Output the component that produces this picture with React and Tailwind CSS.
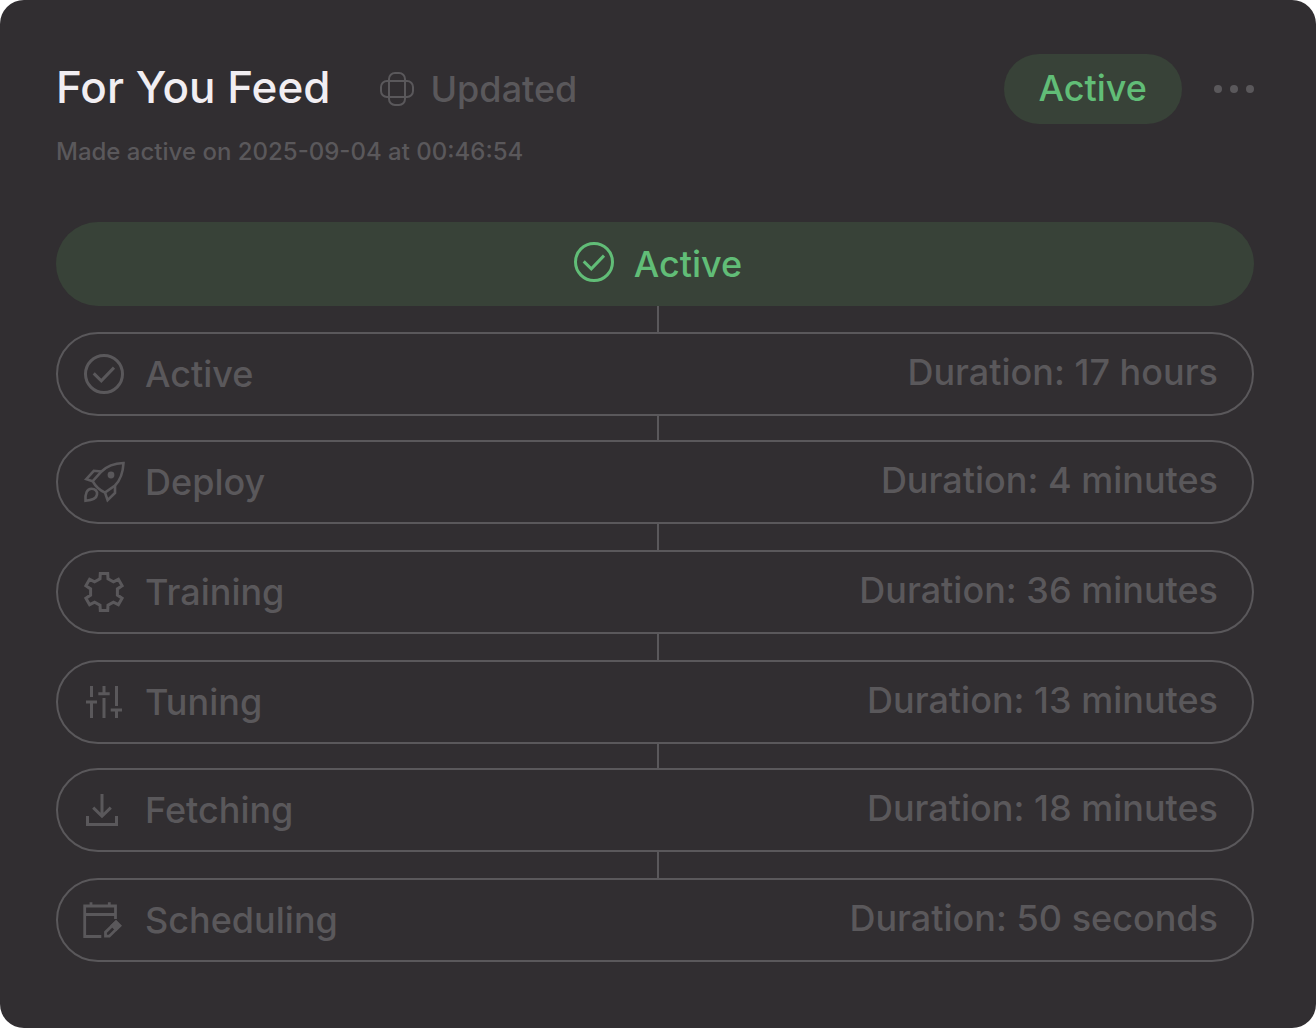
const svgProps = {
  viewBox: '0 0 44 44',
  fill: 'none',
  stroke: 'currentColor',
  strokeWidth: 3,
  className: 'size-11 shrink-0',
  'aria-hidden': true,
};

function CheckIcon() {
  return (
    <svg {...svgProps}>
      <circle cx="22" cy="22" r="18.5" />
      <path d="M11.7 21.4 19.3 28.8 32 15.6" />
    </svg>
  );
}

function RocketIcon() {
  return (
    <svg {...svgProps} strokeWidth={2.6}>
      <path d="M41.5 3C32 3.4 24.5 6.5 19.5 11.5L10.7 21.2C13.5 26.5 17.5 30.3 23 32.6L33 25.5C38 20.5 41 12.5 41.5 3Z" />
      <path d="M19.5 11.5 11.8 10.8 4.3 19.2 10.7 21.2M33 25.5 33 33 25.6 40.2 23 32.6" />
      <path d="M3.5 40.8C3 33.5 5 28.7 9.5 28.7C13 28.7 15.5 31 15 34.5C14.5 38.5 10 40.2 3.5 40.8Z" />
      <circle cx="29" cy="15" r="3.4" fill="currentColor" stroke="none" />
    </svg>
  );
}

function GearIcon() {
  return (
    <svg {...svgProps}>
      <path
        transform="translate(22 22)"
        d="M-3.7-18.4H3.7L4-13.2 9.4-10.1 14.4-12.7 18.1-6.2 13.4-3.1V3.1L18.1 6.2 14.4 12.7 9.4 10.1 4 13.2 3.7 18.4H-3.7L-4 13.2-9.4 10.1-14.4 12.7-18.1 6.2-13.4 3.1V-3.1L-18.1-6.2-14.4-12.7-9.4-10.1-4-13.2Z"
      />
    </svg>
  );
}

function SlidersIcon() {
  return (
    <svg {...svgProps}>
      <path d="M9.5 6V17M4 22H15M9.5 22V38M22 6V13.700M16.300 13.700H27.700M22 18V38M34.500 6V26M28.700 30H40M34.500 30V38" />
    </svg>
  );
}

function DownloadIcon() {
  return (
    <svg {...svgProps}>
      <path d="M20 6V28M11.2 19.600 20 28.200 28.800 19.600M5.500 28V36.500H34.500V28" />
    </svg>
  );
}

function ScheduleIcon() {
  return (
    <svg {...svgProps} strokeWidth={2.8}>
      <path d="M19.3 38.500H2.700V8H33.500V21M2.700 16.500H33.500M9 4.300V8M27.300 4.300V8" />
      <path d="M23.500 38.200V34.200L34 23.900 37.800 27.700 27.300 38.200Z" />
      <path d="M30.200 27.600 34 23.900 37.800 27.700 34 31.500Z" fill="currentColor" />
    </svg>
  );
}

function UpdatedIcon() {
  return (
    <svg viewBox="0 0 34 34" fill="none" stroke="currentColor" strokeWidth="2" className="size-[34px] shrink-0" aria-hidden>
      <rect x="9" y="1" width="16" height="32" rx="6" />
      <rect x="1" y="9" width="32" height="16" rx="6" />
    </svg>
  );
}

const steps = [
  { name: 'Active', duration: '17 hours', Icon: CheckIcon, link: 'h-[26px]' },
  { name: 'Deploy', duration: '4 minutes', Icon: RocketIcon, link: 'h-6' },
  { name: 'Training', duration: '36 minutes', Icon: GearIcon, link: 'h-[26px]' },
  { name: 'Tuning', duration: '13 minutes', Icon: SlidersIcon, link: 'h-[26px]' },
  { name: 'Fetching', duration: '18 minutes', Icon: DownloadIcon, link: 'h-6' },
  { name: 'Scheduling', duration: '50 seconds', Icon: ScheduleIcon, link: 'h-[26px]' },
];

export default function App() {
  return (
    <main className="min-h-screen bg-white font-['Inter',sans-serif] font-medium text-[#5a585b]">
      <section className="min-h-screen rounded-3xl bg-[#312e31] px-14 pt-[54px] pb-[66px]">
        <header>
          <div className="flex items-center">
            <h1 className="pb-1 text-[44px] leading-[66px] font-medium text-[#f1eef2]">For You Feed</h1>
            <div className="ml-[50px] flex items-center gap-4">
              <UpdatedIcon />
              <span className="text-4xl">Updated</span>
            </div>
            <span className="ml-auto rounded-full bg-[#384238] px-[35px] pt-3 pb-3.5 text-4xl leading-[44px] text-[#61bd77]">
              Active
            </span>
            <button type="button" aria-label="More options" className="mr-1.5 ml-8 flex h-10 items-center gap-2">
              <span className="size-2 rounded-full bg-current" />
              <span className="size-2 rounded-full bg-current" />
              <span className="size-2 rounded-full bg-current" />
            </button>
          </div>
          <p className="mt-3 text-2xl">Made active on 2025-09-04 at 00:46:54</p>
        </header>

        <div className="mt-[54px] mr-1.5 flex h-[84px] items-center justify-center gap-[18px] rounded-full bg-[#384238] pl-1 text-4xl text-[#61bd77]">
          <span className="pb-1">
            <CheckIcon />
          </span>
          <span>Active</span>
        </div>

        <ol>
          {steps.map(({ name, duration, Icon, link }) => (
            <li key={name}>
              <div className={`mx-auto w-0.5 bg-[#5a585b] ${link}`} />
              <div className="mr-1.5 flex h-[84px] items-center rounded-full border-2 border-[#5a585b] pr-[34px] pl-6 text-4xl">
                <Icon />
                <span className="ml-[19px]">{name}</span>
                <span className="ml-auto pb-1">Duration: {duration}</span>
              </div>
            </li>
          ))}
        </ol>
      </section>
    </main>
  );
}
